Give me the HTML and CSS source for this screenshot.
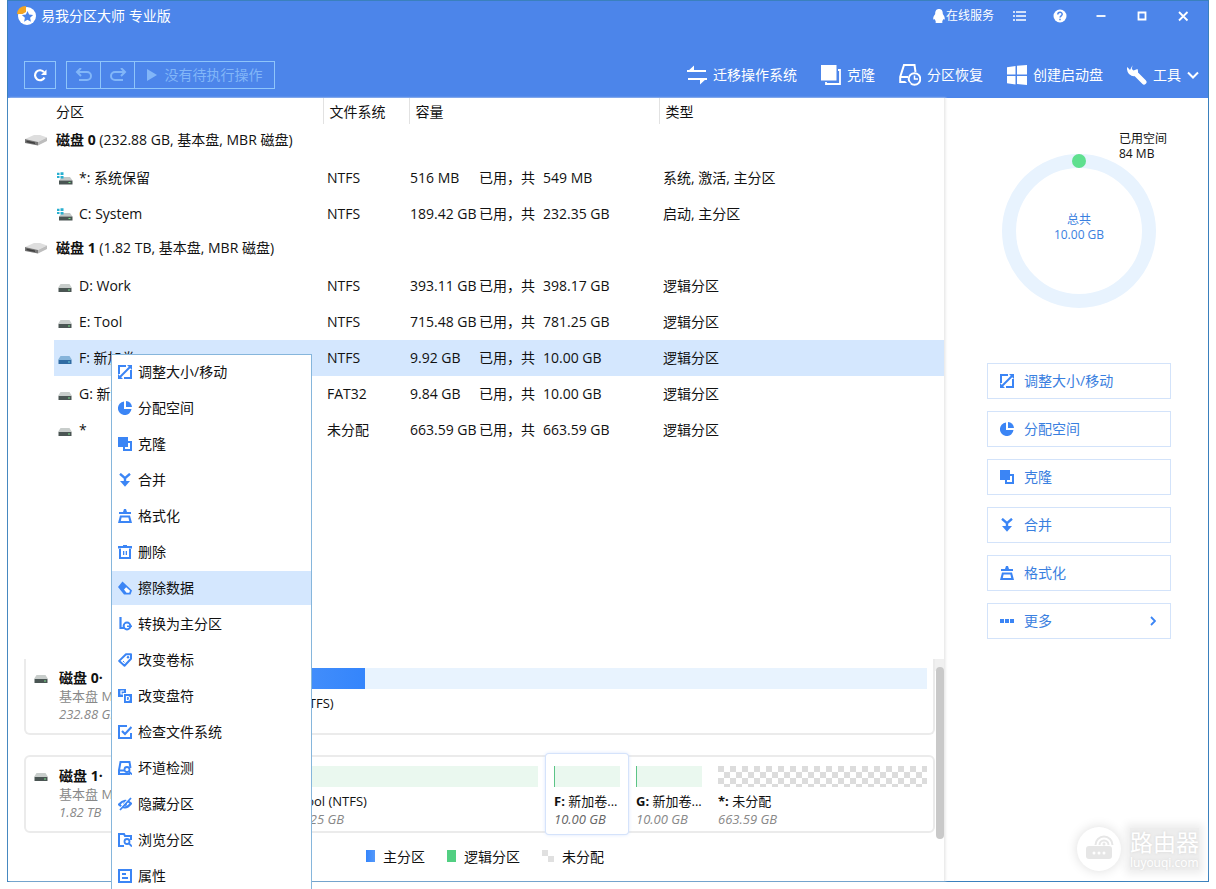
FILE: index.html
```html
<!DOCTYPE html>
<html lang="zh-CN">
<head>
<meta charset="utf-8">
<title>易我分区大师 专业版</title>
<link rel="stylesheet" href="styles.css">
</head>
<body>
<svg class="sprite" aria-hidden="true">
  <symbol id="i-resize" viewBox="0 0 14 14"><path d="M1 9V1h7M13 5v8H6" fill="none" stroke="currentColor" stroke-width="2"/><path d="M2 12 12 2" stroke="currentColor" stroke-width="2"/><path d="M9 0h5v5zM0 9v5h5z" fill="currentColor"/></symbol>
  <symbol id="i-pie" viewBox="0 0 14 14"><path d="M6 .5V8h7.500A6.800 6.800 0 1 1 6 .5z" fill="currentColor"/><path d="M8 0a6.400 6.400 0 0 1 6 6H8z" fill="currentColor"/></symbol>
  <symbol id="i-clone" viewBox="0 0 14 14"><path d="M0 0h10v4h4v10H5v-4H0zM11 6v5H7v1h5V6z" fill="currentColor" fill-rule="evenodd"/><path d="M10 6h2v6H7v-2h3z" fill="#fff"/></symbol>
  <symbol id="i-merge" viewBox="0 0 14 14"><path d="M2 .8 7 5.200 12 .8M7 4.500V9" fill="none" stroke="currentColor" stroke-width="2.400"/><path d="M2 8h10l-5 5.800z" fill="currentColor"/></symbol>
  <symbol id="i-format" viewBox="0 0 14 14"><path d="M6 0h2l1 3h4v2H1V3h4zM2 6.500h10l2 7.500H0zm1.600 2L2.800 12h8.400l-.8-3.500z" fill="currentColor" fill-rule="evenodd"/></symbol>
  <symbol id="i-trash" viewBox="0 0 14 14"><path d="M5 0h4v1h5v2.500H0V1h5zM1 3h12v11H1zm2 .5V12h8V3.500zM5 6h1.300v4H5zm2.700 0H9v4H7.700z" fill="currentColor" fill-rule="evenodd"/></symbol>
  <symbol id="i-erase" viewBox="0 0 14 14"><path d="M4.500.5 14 9.500l-1.500 4H6L0 6z" fill="currentColor"/><path d="m6 8.500 2.200-2.300 3.800 3.500-.8 2H8.500z" fill="#fff"/></symbol>
  <symbol id="i-convert" viewBox="0 0 14 14"><path d="M2.500 0v11H6" fill="none" stroke="currentColor" stroke-width="2.200"/><circle cx="9" cy="9" r="3.400" fill="none" stroke="currentColor" stroke-width="2"/><path d="M9 8.500h5V10H9z" fill="currentColor"/></symbol>
  <symbol id="i-tag" viewBox="0 0 14 14"><path d="M8 1.200h5v4.600L6.500 12.700 1.200 7.900z" fill="none" stroke="currentColor" stroke-width="2" stroke-linejoin="round"/><circle cx="10" cy="4.200" r="1.200" fill="currentColor"/><path d="m5 8 1.500 1.500" stroke="currentColor"/></symbol>
  <symbol id="i-letter" viewBox="0 0 14 14"><path d="M0 0h8v4H5v4H0zM6 5h8v9H6z" fill="currentColor"/><path d="M6 2H3v3h2M8.500 7.500v4h1.500q1.500 0 1.500-2t-1.500-2z" fill="none" stroke="#fff" stroke-width="1.200"/></symbol>
  <symbol id="i-check" viewBox="0 0 14 14"><path d="M9 1H1v12h12V8" fill="none" stroke="currentColor" stroke-width="2"/><path d="m4 6 3 3 6.500-7" fill="none" stroke="currentColor" stroke-width="2.200"/></symbol>
  <symbol id="i-scan" viewBox="0 0 14 14"><path d="M12.500 7 11.500 1h-9L1 9v4h6M1 9.500h5" fill="none" stroke="currentColor" stroke-width="2"/><circle cx="9" cy="8.500" r="2.500" fill="none" stroke="currentColor" stroke-width="1.800"/><path d="m10.500 10 3.500 3.500M6 13h6" stroke="currentColor" stroke-width="1.800"/></symbol>
  <symbol id="i-hide" viewBox="0 0 14 14"><path d="M1 7.500Q7 .5 13 6.500 7 14 1 7.500z" fill="none" stroke="currentColor" stroke-width="2.200"/><circle cx="7" cy="7" r="2" fill="currentColor"/><path d="M1.500 12 12.500 0" stroke="#fff" stroke-width="1.500"/><path d="M2 13 13 1" stroke="currentColor" stroke-width="1.800"/></symbol>
  <symbol id="i-browse" viewBox="0 0 14 14"><path d="M6 13H1V1h5l1 2h6v4" fill="none" stroke="currentColor" stroke-width="2"/><circle cx="9" cy="8.500" r="2.500" fill="none" stroke="currentColor" stroke-width="1.800"/><path d="m10.500 10 3.500 3.500" stroke="currentColor" stroke-width="1.800"/></symbol>
  <symbol id="i-props" viewBox="0 0 14 14"><path d="M1 1h12v12H1z" fill="none" stroke="currentColor" stroke-width="2"/><path d="M4 5h4M4 9h6" stroke="currentColor" stroke-width="1.800"/></symbol>
  <symbol id="i-more" viewBox="0 0 14 14"><path d="M0 5h4v4H0zM5 5h4v4H5zM10 5h4v4h-4z" fill="currentColor"/></symbol>
  <symbol id="i-drive" viewBox="0 0 14 9"><path d="M2.500 0h9L14 4H0z" fill="#c8cdcb"/><path d="M.5 4h13v4H.5z" fill="#4a5553"/><path d="M10 5.500h2v1h-2z" fill="#7be08c"/></symbol>
  <symbol id="i-drive-blue" viewBox="0 0 14 9"><path d="M2.500 0h9L14 4H0z" fill="#86b4da"/><path d="M.5 4h13v4H.5z" fill="#2f6ba3"/><path d="M10 5.500h2v1h-2z" fill="#6ed0d8"/></symbol>
  <symbol id="i-sys" viewBox="0 0 16 14"><path d="M5 5h8l2.500 3.500H2z" fill="#c3c8c7"/><path d="M2 8.500h13.500v4H2z" fill="#4a5553"/><path d="M11.500 10h2v1h-2z" fill="#7be08c"/><path d="M0 .8h2.500V3H0zM3.500.3h3V3h-3zM0 4h2.500v2H0zM3.500 4h3v2.400h-3z" fill="#28afd0"/></symbol>
  <symbol id="i-disk" viewBox="0 0 22 12"><path d="M0 5 9 1h6l7 2.500L13 8z" fill="#dedede"/><path d="m0 5 13 3v3.500L0 9z" fill="#777"/><path d="m13 8 9-4.500V7l-9 4.500z" fill="#bdbdbd"/><path d="m1.500 6.500 8.500 2V10l-8.500-1.700z" fill="#3f3f3f"/></symbol>
</svg>
<div class="desktop">
  <main class="window">
    <header class="header">
      <div class="titlebar">
        <svg class="logo" viewBox="0 0 20 20"><circle cx="11" cy="10" r="9" fill="#fff"/><path d="M1 8Q2 0 10 0v6L6.500 8z" fill="#f5a623"/><path d="m11.500 5 1.600 3.600 4 .5-3 2.700.8 4-3.400-2-3.400 2 .8-4-3-2.700 4-.5z" fill="#4c85ea"/></svg>
        <h1 class="title">易我分区大师 专业版</h1>
        <button class="service"><svg viewBox="0 0 12 14"><path d="M6 0C3 0 2.200 2.200 2.200 5 1 6.500.2 8 .2 9.700c0 1.300.8 1 1.500.3.200 1 .6 1.700 1.200 2.200-1.400 1.500.5 1.800 3.100 1.800s4.500-.3 3.100-1.800c.6-.5 1-1.200 1.200-2.200.7.7 1.500 1 1.500-.3C11.800 8 11 6.500 9.800 5 9.800 2.200 9 0 6 0z" fill="#fff"/></svg>在线服务</button>
        <div class="wincontrols">
          <button aria-label="菜单"><svg viewBox="0 0 14 14"><path d="M1 3h2M1 7h2M1 11h2M4 3h10M4 7h10M4 11h10" stroke="#fff" stroke-width="1.600"/></svg></button>
          <button aria-label="帮助"><svg viewBox="0 0 14 14"><circle cx="7" cy="7" r="6.500" fill="#fff"/><path d="M4.800 5.500C4.800 2.500 9.200 2.600 9.200 5.200 9.200 6.800 7 6.800 7 8.600M7 9.800v1.400" fill="none" stroke="#4c85ea" stroke-width="1.500"/></svg></button>
          <button aria-label="最小化"><svg viewBox="0 0 14 14"><path d="M2.500 7h9" stroke="#fff" stroke-width="1.800"/></svg></button>
          <button aria-label="最大化"><svg viewBox="0 0 14 14"><path d="M3.500 3.500h7v7h-7z" fill="none" stroke="#fff" stroke-width="1.800"/></svg></button>
          <button aria-label="关闭"><svg viewBox="0 0 14 14"><path d="m3 3 8.500 8.500M11.500 3 3 11.500" stroke="#fff" stroke-width="1.800"/></svg></button>
        </div>
      </div>
      <div class="toolbar">
        <button class="refresh" aria-label="刷新"><svg viewBox="0 0 14 14"><path d="M11.500 9.500A5 5 0 1 1 11 4.200" fill="none" stroke="#fff" stroke-width="2.200"/><path d="M13.500 1.500V7H8z" fill="#fff"/></svg></button>
        <div class="pending">
          <button disabled aria-label="撤销"><svg viewBox="0 0 18 14"><path d="M2 4h10a4 4 0 0 1 0 8H4M6 0 2 4l4 4" fill="none" stroke="currentColor" stroke-width="2"/></svg></button>
          <button disabled aria-label="重做"><svg viewBox="0 0 18 14"><path d="M16 4H6a4 4 0 0 0 0 8h8M12 0l4 4-4 4" fill="none" stroke="currentColor" stroke-width="2"/></svg></button>
          <button class="execute" disabled><svg viewBox="0 0 10 12"><path d="M0 0v12l10-6z" fill="currentColor"/></svg>没有待执行操作</button>
        </div>
        <nav class="tools">
          <button><svg viewBox="0 0 20 20"><path d="M0 6h19M1 14h19" stroke="#fff" stroke-width="2.200"/><path d="M0 7 7 .5V7zM20 13l-7 6.500V13z" fill="#fff"/></svg>迁移操作系统</button>
          <button><svg viewBox="0 0 20 20"><path d="M0 0h15.500v15.500H0z" fill="#fff"/><path d="M17 5h2v14H5v-2" fill="none" stroke="#fff" stroke-width="1.800"/></svg>克隆</button>
          <button><svg class="wide" viewBox="0 0 22 22"><path d="M16.500 8 15.500 1H5L1.200 13v5H9M1.200 13H9" fill="none" stroke="#fff" stroke-width="2"/><circle cx="15.500" cy="15" r="5.800" fill="#4c85ea" stroke="#fff" stroke-width="2"/><path d="M15.500 11.500V15H19" fill="none" stroke="#fff" stroke-width="1.500"/><path d="m7 16.500 4 4" fill="none" stroke="#4c85ea" stroke-width="2"/></svg>分区恢复</button>
          <button><svg viewBox="0 0 20 20"><path d="M0 2.200 8.500 1v8.500H0zM10 .8 20 0v9.500H10zM0 11h8.500v8.500L0 18.300zM10 11h10v9l-10-1z" fill="#fff"/></svg>创建启动盘</button>
          <button><svg viewBox="0 0 20 20"><path d="m8.500 8.500 8.500 8.500" stroke="#fff" stroke-width="5" stroke-linecap="round"/><path d="M5.500.3 4.800 4 6.500 5.500 10.500 4Q12 8 9.500 10.500 6 12.500 2 9-.8 5.500.3 2L3 5z" fill="#fff"/></svg>工具<svg class="caret" viewBox="0 0 12 8"><path d="m1 1.500 5 5 5-5" fill="none" stroke="#fff" stroke-width="2"/></svg></button>
        </nav>
      </div>
    </header>
    <div class="body">
      <section class="left">
        <div class="list">
          <table class="partitions">
            <colgroup><col class="c-gutter"><col class="c-name"><col class="c-fs"><col class="c-cap"><col></colgroup>
            <thead><tr><td></td><th>分区</th><th>文件系统</th><th>容量</th><th>类型</th></tr></thead>
            <tbody>
              <tr class="disk"><td><svg><use href="#i-disk"/></svg></td><td colspan="4"><b>磁盘 0</b> (232.88 GB, 基本盘, MBR 磁盘)</td></tr>
              <tr><td></td><td class="name"><svg class="sys"><use href="#i-sys"/></svg>*: 系统保留</td><td>NTFS</td><td class="cap"><span class="used">516 MB</span><span class="of">已用，共</span>549 MB</td><td>系统, 激活, 主分区</td></tr>
              <tr><td></td><td class="name"><svg class="sys"><use href="#i-sys"/></svg>C: System</td><td>NTFS</td><td class="cap"><span class="used">189.42 GB</span><span class="of">已用，共</span>232.35 GB</td><td>启动, 主分区</td></tr>
              <tr class="disk"><td><svg><use href="#i-disk"/></svg></td><td colspan="4"><b>磁盘 1</b> (1.82 TB, 基本盘, MBR 磁盘)</td></tr>
              <tr><td></td><td class="name"><svg class="drv"><use href="#i-drive"/></svg>D: Work</td><td>NTFS</td><td class="cap"><span class="used">393.11 GB</span><span class="of">已用，共</span>398.17 GB</td><td>逻辑分区</td></tr>
              <tr><td></td><td class="name"><svg class="drv"><use href="#i-drive"/></svg>E: Tool</td><td>NTFS</td><td class="cap"><span class="used">715.48 GB</span><span class="of">已用，共</span>781.25 GB</td><td>逻辑分区</td></tr>
              <tr class="selected"><td></td><td class="name"><svg class="drv"><use href="#i-drive-blue"/></svg>F: 新加卷</td><td>NTFS</td><td class="cap"><span class="used">9.92 GB</span><span class="of">已用，共</span>10.00 GB</td><td>逻辑分区</td></tr>
              <tr><td></td><td class="name"><svg class="drv"><use href="#i-drive"/></svg>G: 新加卷</td><td>FAT32</td><td class="cap"><span class="used">9.84 GB</span><span class="of">已用，共</span>10.00 GB</td><td>逻辑分区</td></tr>
              <tr><td></td><td class="name"><svg class="drv"><use href="#i-drive"/></svg>*</td><td>未分配</td><td class="cap"><span class="used">663.59 GB</span><span class="of">已用，共</span>663.59 GB</td><td>逻辑分区</td></tr>
            </tbody>
          </table>
        </div>
        <div class="map">
          <div class="cards">
            <article class="card first">
              <svg class="drv"><use href="#i-drive"/></svg>
              <div class="disklabel"><b>磁盘 0·</b><span>基本盘 MBR</span><i>232.88 GB</i></div>
              <div class="part p-reserved"><div class="bar primary"><div class="fill" style="width:94%"></div></div></div>
              <div class="part grow"><div class="bar primary"><div class="fill" style="width:19%"></div></div><p>C: System (NTFS)</p></div>
            </article>
            <article class="card">
              <svg class="drv"><use href="#i-drive"/></svg>
              <div class="disklabel"><b>磁盘 1·</b><span>基本盘 MBR</span><i>1.82 TB</i></div>
              <div class="part grow"><div class="bar logical"></div></div>
              <div class="part p-tool"><div class="bar logical"></div><p>E: Tool (NTFS)</p><i>781.25 GB</i></div>
              <div class="part p-small active"><div class="bar logical sliver"></div><p><b>F:</b> 新加卷...</p><i>10.00 GB</i></div>
              <div class="part p-small"><div class="bar logical sliver"></div><p><b>G:</b> 新加卷...</p><i>10.00 GB</i></div>
              <div class="part p-free"><div class="bar checker"></div><p><b>*:</b> 未分配</p><i>663.59 GB</i></div>
            </article>
          </div>
          <div class="scrollbar"><div class="thumb"></div></div>
        </div>
        <footer class="legend">
          <span><i class="sw blue"></i>主分区</span><span><i class="sw green"></i>逻辑分区</span><span><i class="sw grey"></i>未分配</span>
        </footer>
      </section>
      <aside class="side">
        <figure class="usage">
          <svg viewBox="0 0 154 154"><circle cx="77" cy="77" r="70" fill="none" stroke="#e8f3fe" stroke-width="14"/><circle cx="77" cy="7" r="7" fill="#5fe08f"/></svg>
          <div class="total">总共<br>10.00 GB</div>
          <figcaption>已用空间<br>84 MB</figcaption>
        </figure>
        <div class="actions">
          <button><svg><use href="#i-resize"/></svg>调整大小/移动</button>
          <button><svg><use href="#i-pie"/></svg>分配空间</button>
          <button><svg><use href="#i-clone"/></svg>克隆</button>
          <button><svg><use href="#i-merge"/></svg>合并</button>
          <button><svg><use href="#i-format"/></svg>格式化</button>
          <button><svg><use href="#i-more"/></svg>更多<svg class="next" viewBox="0 0 6 10"><path d="m1 1 4 4-4 4" fill="none" stroke="currentColor" stroke-width="1.800"/></svg></button>
        </div>
      </aside>
    </div>
  </main>
  <div class="menu" role="menu">
    <button role="menuitem"><svg><use href="#i-resize"/></svg>调整大小/移动</button>
    <button role="menuitem"><svg><use href="#i-pie"/></svg>分配空间</button>
    <button role="menuitem"><svg><use href="#i-clone"/></svg>克隆</button>
    <button role="menuitem"><svg><use href="#i-merge"/></svg>合并</button>
    <button role="menuitem"><svg><use href="#i-format"/></svg>格式化</button>
    <button role="menuitem"><svg><use href="#i-trash"/></svg>删除</button>
    <button role="menuitem" class="hover"><svg><use href="#i-erase"/></svg>擦除数据</button>
    <button role="menuitem"><svg><use href="#i-convert"/></svg>转换为主分区</button>
    <button role="menuitem"><svg><use href="#i-tag"/></svg>改变卷标</button>
    <button role="menuitem"><svg><use href="#i-letter"/></svg>改变盘符</button>
    <button role="menuitem"><svg><use href="#i-check"/></svg>检查文件系统</button>
    <button role="menuitem"><svg><use href="#i-scan"/></svg>坏道检测</button>
    <button role="menuitem"><svg><use href="#i-hide"/></svg>隐藏分区</button>
    <button role="menuitem"><svg><use href="#i-browse"/></svg>浏览分区</button>
    <button role="menuitem"><svg><use href="#i-props"/></svg>属性</button>
  </div>
  <div class="watermark">
    <svg viewBox="0 0 44 44"><rect x="9" y="19" width="26" height="13" rx="3" fill="#e6e6e6"/><circle cx="17" cy="26" r="1.500" fill="#fff"/><circle cx="22" cy="26" r="1.500" fill="#fff"/><circle cx="27" cy="26" r="1.500" fill="#fff"/><path d="M18.500 18a8.500 8.500 0 0 1 17 0M22.500 18a4.500 4.500 0 0 1 9 0" fill="none" stroke="#e6e6e6" stroke-width="2"/><circle cx="27" cy="17" r="1.500" fill="#e6e6e6"/></svg>
    <div class="sitename"><strong>路由器</strong><small>luyouqi.com</small></div>
  </div>
</div>
</body>
</html>
```

FILE: styles.css
```css
* { box-sizing: border-box; }
body {
  margin: 0;
  background: #fff;
  color: #111;
  font: 14px/18px "Open Sans", "Noto Sans CJK SC", sans-serif;
}
button {
  display: flex;
  align-items: center;
  margin: 0;
  padding: 0;
  border: 0;
  background: none;
  color: inherit;
  font: inherit;
  white-space: nowrap;
}
svg { display: block; flex: none; }
h1, p, figure { margin: 0; }
.sprite { position: absolute; width: 0; height: 0; }

.desktop {
  position: relative;
  height: 100vh;
  overflow: hidden;
  padding: 0 7px 7px;
}
.window {
  display: flex;
  flex-direction: column;
  height: 100%;
  border: 1px solid #3a80bd;
}

/* header */
.header { background: #4c85ea; color: #fff; padding-bottom: 9px; }
.titlebar { display: flex; align-items: center; height: 30px; padding: 0 5px 0 8px; }
.logo { width: 20px; height: 20px; margin-right: 5px; }
.title { flex: 1; font-size: 14px; font-weight: 400; line-height: 18px; }
.service { font-size: 12px; gap: 1px; margin-right: 4px; }
.service svg { width: 12px; height: 14px; }
.wincontrols { display: flex; }
.wincontrols button { width: 41px; height: 30px; justify-content: center; }
.wincontrols svg { width: 14px; height: 14px; }
.toolbar { display: flex; align-items: center; margin-top: 30px; padding: 0 9px 0 16px; height: 28px; }
.refresh { width: 32px; height: 28px; justify-content: center; border: 1px solid #8fc5fa; margin-right: 10px; }
.refresh svg { width: 14px; height: 14px; }
.pending { display: flex; height: 28px; border: 1px solid #8fc5fa; color: #82b6f8; }
.pending button { width: 34px; justify-content: center; border-right: 1px solid #8fc5fa; }
.pending svg { width: 18px; height: 14px; }
.pending .execute { width: 139px; border: 0; gap: 8px; }
.pending .execute svg { width: 10px; height: 12px; }
.tools { display: flex; gap: 24px; margin-left: auto; }
.tools button { gap: 6px; }
.tools svg { width: 20px; height: 20px; }
.tools .wide { width: 22px; height: 22px; }
.tools .caret { width: 12px; height: 8px; }

/* body */
.body { display: flex; flex: 1; min-height: 0; }
.left { display: flex; flex-direction: column; flex: 1; min-width: 0; border-right: 1px solid #ececec; box-shadow: 1px 0 2px #eee; }
.list { flex: 1; min-height: 0; overflow: hidden; }
.partitions { width: 100%; table-layout: fixed; border-collapse: collapse; }
.c-gutter { width: 46px; }
.c-name { width: 269px; }
.c-fs { width: 86px; }
.c-cap { width: 250px; }
.partitions th { height: 26px; padding: 1px 0 0 6px; text-align: left; font-weight: 400; border-left: 1px solid #e2e2e2; }
.partitions th:nth-child(2) { padding-left: 2px; border: 0; }
.partitions td { padding: 0 0 0 4px; white-space: nowrap; }
.partitions .cap { padding-left: 1px; }
.partitions tbody tr { height: 36px; }
.partitions .name svg { display: inline-block; margin-right: 6px; vertical-align: middle; }
.partitions .disk td { padding: 0 0 4px 2px; }
.partitions .disk td:first-child { padding-left: 17px; }
.disk svg { width: 22px; height: 12px; }
.disk b { font-weight: 700; }
.sys { width: 16px; height: 14px; }
.drv { width: 14px; height: 9px; }
.partitions .name { padding-left: 3px; }
.partitions .name .drv { margin: 2px 7px 0 1px; }
.selected td:not(:first-child) { background: #d4e7fe; }
.used { display: inline-block; width: 69px; }
.of { display: inline-block; width: 64px; }

/* disk map */
.map { display: flex; height: 180px; }
.cards { flex: 1; min-width: 0; display: flex; flex-direction: column; gap: 20px; padding-left: 16px; }
.card { display: flex; height: 78px; padding-left: 8px; border: 2px solid #ebebeb; border-radius: 6px; }
.card.first { height: 76px; border-top: 0; border-radius: 0 0 6px 6px; }
.card > .drv { margin: 16px 11px 0 0; }
.disklabel { display: flex; flex-direction: column; width: 80px; padding-top: 10px; white-space: nowrap; font-size: 13px; color: #888; }
.disklabel b { font-size: 14px; color: #111; }
.part i { color: #888; }
.part { display: flex; flex-direction: column; padding: 9px 8px 0; white-space: nowrap; font-size: 13px; }
.part p { margin-top: 5px; }
.part.grow { flex: 1; }
.p-reserved { width: 86px; }
.p-tool { width: 269px; }
.p-small { width: 82px; }
.p-free { width: 223px; padding-right: 6px; }
.card.first .grow { padding-right: 6px; }
.bar { height: 21px; }
.primary { background: #e8f3fe; }
.fill { height: 21px; background: linear-gradient(90deg, #5599fa, #3485fc); }
.logical { background: #eaf8ef; }
.sliver { border-left: 1px solid #5cc487; }
.checker { background: repeating-conic-gradient(#fff 0 25%, #dcdcdc 0 50%) 0 0 / 12px 12px; }
.active { margin: -3px 0; padding-top: 12px; background: #fff; border-radius: 3px; box-shadow: 0 0 0 1px #d5e3fb, 0 0 4px #c5d8fa; }
.active i { color: #666; }
.scrollbar { width: 9px; padding-top: 8px; background: linear-gradient(#f0f0f0 0 12px, #fff 12px); }
.thumb { height: 172px; margin-left: 1px; border-radius: 4px; background: #c9c9c9; }
.legend { display: flex; justify-content: center; gap: 22px; height: 42px; padding: 9px 0 0 18px; }
.legend span { display: flex; align-items: flex-start; gap: 8px; }
.sw { width: 9px; height: 12px; margin-top: 2px; }
.blue { background: linear-gradient(90deg, #3485fc, #5599fa); }
.green { background: #52cf82; }
.grey { width: 12px; background: repeating-conic-gradient(#fff 0 25%, #e0e0e0 0 50%) 0 0 / 12px 12px; }

/* side panel */
.side { width: 263px; padding: 56px 37px 0 42px; }
.usage { position: relative; width: 154px; height: 154px; margin: 0 auto; font-size: 12px; line-height: 15px; }
.total { position: absolute; inset: 58px 0 auto; text-align: center; color: #3a80e0; }
.usage figcaption { position: absolute; left: 117px; top: -23px; white-space: nowrap; }
.actions { display: flex; flex-direction: column; gap: 12px; margin-top: 55px; }
.actions button { height: 36px; padding: 0 14px 0 12px; gap: 10px; border: 1px solid #d3e3fa; color: #3a80e0; }
.actions svg, .menu svg { width: 14px; height: 14px; color: #3b85f5; }
.actions .next { width: 6px; height: 10px; margin-left: auto; }

/* context menu */
.menu {
  position: absolute;
  left: 111px;
  top: 354px;
  display: flex;
  flex-direction: column;
  gap: 2px;
  width: 201px;
  border: 1px solid #86b6dc;
  background: #fff;
}
.menu button { height: 34px; padding-left: 6px; gap: 6px; }
.menu .hover { background: #d4e7fe; }

/* site mark */
.watermark { position: absolute; right: 17px; bottom: 18px; display: flex; align-items: center; gap: 9px; color: #fff; text-shadow: 0 0 3px #d4d4d4; }
.watermark svg { width: 44px; height: 44px; border-radius: 50%; background: #fff; box-shadow: 0 0 12px #ddd; }
.sitename { background: #ededed; box-shadow: 0 0 8px 4px #ededed; }
.watermark strong { display: block; font-size: 23px; line-height: 28px; font-weight: 400; }
.watermark small { display: block; font-size: 12px; line-height: 14px; }
```
